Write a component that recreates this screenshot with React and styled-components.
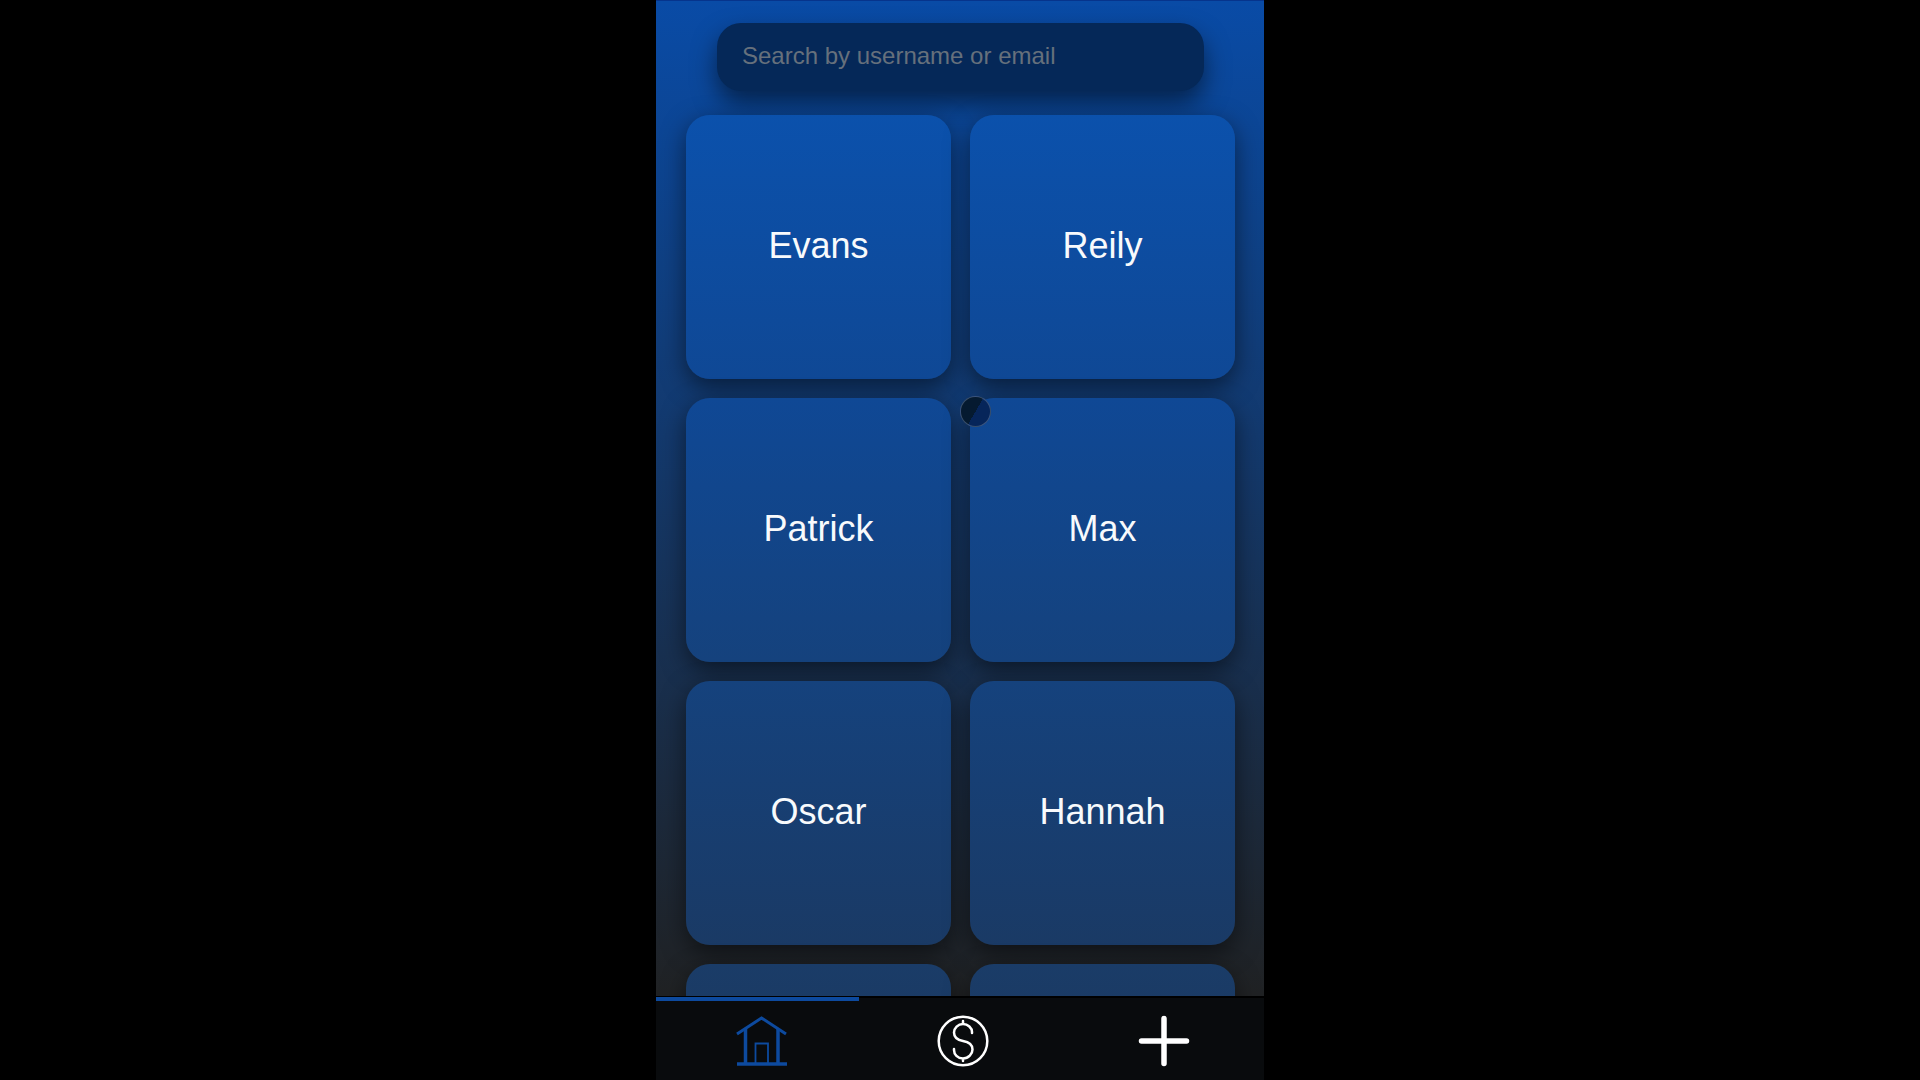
import React, { useState } from "react";
import styled, { createGlobalStyle } from "styled-components";

const GlobalStyle = createGlobalStyle`
  * { box-sizing: border-box; }
  body {
    margin: 0;
    background: #000;
    font-family: "Liberation Sans", Arial, sans-serif;
  }
`;

const Stage = styled.div`
  display: flex;
  justify-content: center;
  height: 100vh;
  overflow: hidden;
`;

const Phone = styled.div`
  display: flex;
  flex-direction: column;
  width: 100%;
  max-width: 608px;
  background: linear-gradient(#094ba6, #202224 92%);
  border-top: 1px solid #06348c;
`;

const Screen = styled.main`
  flex: 1;
  min-height: 0;
  overflow: hidden;
`;

const SearchForm = styled.form`
  display: flex;
  padding: 22px 60px 24px 61px;
`;

const SearchInput = styled.input`
  flex: 1;
  min-width: 0;
  height: 68px;
  padding: 0 25px 2px;
  border: 0;
  border-radius: 24px;
  outline: 0;
  background: #052858;
  box-shadow: 0 12px 24px rgba(0, 0, 0, 0.5);
  color: #fff;
  font: 24px "Liberation Sans", Arial, sans-serif;

  &::placeholder {
    color: #66707c;
    opacity: 1;
  }
`;

const People = styled.div`
  display: grid;
  grid-template-columns: 1fr 1fr;
  gap: 19px;
  padding: 0 29px 0 30px;
`;

const rowFills = [
  "linear-gradient(#0b51ac, #0f4895)",
  "linear-gradient(#0f4895, #15427d)",
  "linear-gradient(#15427d, #1a3a65)",
  "linear-gradient(#1a3c68, #1e3350)",
];

const PersonCard = styled.button`
  height: 264px;
  padding: 0 0 2px;
  border: 0;
  border-radius: 24px;
  background: ${({ $row }) => rowFills[$row]};
  box-shadow: 0 8px 24px rgba(0, 0, 0, 0.5);
  color: #f8fafc;
  font: 36px "Liberation Sans", Arial, sans-serif;
`;

const TabBar = styled.nav`
  position: relative;
  display: grid;
  grid-template-columns: repeat(3, 1fr);
  height: 84px;
  padding: 4px 0 0 6px;
  border-top: 2px solid #000;
  background: #090b0d;
`;

const ActiveMark = styled.span`
  position: absolute;
  top: -1px;
  left: 0;
  width: calc(100% / 3);
  height: 4px;
  background: #0d4a9e;
`;

const Tab = styled.a`
  display: flex;
  align-items: center;
  justify-content: center;
  color: ${({ $active }) => ($active ? "#0d4a9e" : "#fff")};
`;

const TabIcon = styled.svg`
  width: 52px;
  height: 52px;
  fill: none;
  stroke: currentColor;
`;

const TouchDot = styled.span`
  position: fixed;
  top: 396px;
  left: 50%;
  width: 31px;
  height: 31px;
  border: 1px solid rgba(110, 130, 160, 0.5);
  border-radius: 50%;
  background: linear-gradient(120deg, #051a30 50%, #06255a 50%);
  pointer-events: none;
`;

const names = ["Evans", "Reily", "Patrick", "Max", "Oscar", "Hannah", "", ""];

export default function App() {
  const [query, setQuery] = useState("");
  return (
    <>
      <GlobalStyle />
      <Stage>
        <Phone>
          <Screen>
            <SearchForm role="search" onSubmit={(e) => e.preventDefault()}>
              <SearchInput
                type="search"
                aria-label="Search by username or email"
                placeholder="Search by username or email"
                value={query}
                onChange={(e) => setQuery(e.target.value)}
              />
            </SearchForm>
            <People>
              {names.map((name, i) => (
                <PersonCard key={i} type="button" $row={Math.floor(i / 2)}>
                  {name}
                </PersonCard>
              ))}
            </People>
          </Screen>
          <TabBar>
            <ActiveMark />
            <Tab href="#home" aria-label="Home" $active>
              <TabIcon viewBox="0 0 52 52">
                <path d="M1 19 25.500 3 50 19" strokeWidth="3" />
                <path d="M9.500 14v35M42 14v35" strokeWidth="3.500" />
                <path d="M1 49h50" strokeWidth="3.500" />
                <path d="M19.500 48V28.500H32V48" strokeWidth="1.800" />
              </TabIcon>
            </Tab>
            <Tab href="#money" aria-label="Money">
              <TabIcon viewBox="0 0 52 52" strokeWidth="2.500" strokeLinecap="round">
                <circle cx="26" cy="26" r="24.300" />
                <path d="M35 18v-1c0-4-4-8-9-8s-9 4-9 8.500S20 25 26 26s9.500 4 9.500 8.500-4 9-9.500 9-9-4-9-8.500v-1M26 6v3M26 43.500V46" />
              </TabIcon>
            </Tab>
            <Tab href="#add" aria-label="Add">
              <TabIcon viewBox="0 0 52 52" strokeWidth="5.500" strokeLinecap="round">
                <path d="M26 3.500v45M3.500 26h45" />
              </TabIcon>
            </Tab>
          </TabBar>
        </Phone>
        <TouchDot />
      </Stage>
    </>
  );
}
